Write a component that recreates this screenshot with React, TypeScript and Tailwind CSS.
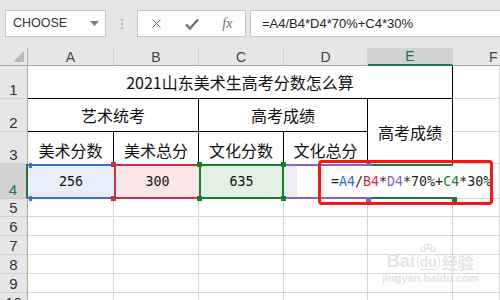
import { X } from "lucide-react";

const cjk = "font-['Noto_Sans_CJK_SC',sans-serif]";
const mono = "font-['DejaVu_Sans_Mono','Liberation_Mono',monospace]";

const tbl = `flex items-center justify-center border-black text-[16px] leading-none text-[#111] ${cjk}`;
const grid = "border-r border-b border-[#d4d4d4]";
const colHead =
  "flex items-center justify-center border-r border-b border-r-[#cfcfcf] border-b-[#ababab] bg-[#e6e6e6] text-[14px] leading-none text-[#444]";

function RowHead({ n, active }: { n: number; active?: boolean }) {
  return (
    <div
      className={
        active
          ? "flex items-end justify-center border-b border-r-2 border-b-[#c6c6c6] border-r-[#217346] bg-[#d2d2d2] pb-[1px] text-[15px] leading-none text-[#217346]"
          : "flex items-end justify-center border-b border-r border-b-[#d0d0d0] border-r-[#a9a9a9] bg-[#e6e6e6] pb-[1px] text-[15px] leading-none text-[#333]"
      }
    >
      {n}
    </div>
  );
}

function FormulaBar() {
  return (
    <div className="flex h-[48px] items-start bg-[#e6e6e6] pl-[5px] pt-[10px]">
      <div className="flex h-[27px] w-[101px] items-center justify-between border border-[#c6c6c6] bg-white pl-[7px] pr-[6px] text-[12.5px] text-[#333]">
        <span>CHOOSE</span>
        <svg width="9" height="5" viewBox="0 0 9 5">
          <path d="M0 0h9L4.5 5z" fill="#7a7a7a" />
        </svg>
      </div>
      <div className="flex h-[27px] w-[31px] flex-col items-center justify-center gap-[2px]">
        <span className="h-[2px] w-[2px] bg-[#b5b5b5]" />
        <span className="h-[2px] w-[2px] bg-[#b5b5b5]" />
        <span className="h-[2px] w-[2px] bg-[#b5b5b5]" />
      </div>
      <div className="flex h-[27px] w-[109px] items-center border border-[#c6c6c6] bg-white pl-[1px] text-[#6e6e6e]">
        <span className="flex w-[36px] justify-center">
          <X size={15} strokeWidth={1.6} />
        </span>
        <span className="flex w-[36px] justify-center">
          <svg width="14" height="12" viewBox="0 0 14 12">
            <path d="M1 6.5 5 10.5 13 1.5" fill="none" stroke="#6e6e6e" strokeWidth="2.4" />
          </svg>
        </span>
        <span className="flex w-[36px] justify-center font-['Liberation_Serif',serif] text-[14px] italic leading-none">
          fx
        </span>
      </div>
      <div className="ml-[4px] flex h-[27px] flex-1 items-center border border-r-0 border-[#c6c6c6] bg-white pl-[11px] text-[13px] text-[#222]">
        =A4/B4*D4*70%+C4*30%
      </div>
    </div>
  );
}

function Sheet() {
  const empty = [5, 6, 7, 8, 9, 10];
  return (
    <div className="grid grid-cols-[28px_86px_85px_85px_84px_85px_1fr] grid-rows-[18px_33px_33px_32px_35px_18px_19px_19px_19px_19px_19px]">
      {/* column header */}
      <div className="relative border-r border-b border-r-[#a9a9a9] border-b-[#ababab] bg-[#e6e6e6]">
        <svg className="absolute right-[3px] bottom-[3px]" width="11" height="11" viewBox="0 0 11 11">
          <path d="M11 0v11H0z" fill="#b9b9b9" />
        </svg>
      </div>
      <div className={colHead}>A</div>
      <div className={colHead}>B</div>
      <div className={colHead}>C</div>
      <div className={colHead}>D</div>
      <div className="flex items-center justify-center border-r border-b-2 border-r-[#cfcfcf] border-b-[#217346] bg-[#d2d2d2] text-[14px] leading-none text-[#217346]">
        E
      </div>
      <div className="flex items-center justify-start border-b border-b-[#ababab] bg-[#e6e6e6] pl-[36px] text-[14px] leading-none text-[#444]">
        F
      </div>

      {/* row 1 */}
      <RowHead n={1} />
      <div className={`${tbl} col-span-5 border-r border-b`}>2021山东美术生高考分数怎么算</div>
      <div className={grid} />

      {/* row 2 */}
      <RowHead n={2} />
      <div className={`${tbl} col-span-2 border-r border-b`}>艺术统考</div>
      <div className={`${tbl} col-span-2 border-r border-b`}>高考成绩</div>
      <div className={`${tbl} row-span-2 border-r`}>高考成绩</div>
      <div className={grid} />

      {/* row 3 */}
      <RowHead n={3} />
      <div className={`${tbl} border-r pt-[3px]`}>美术分数</div>
      <div className={`${tbl} border-r pt-[3px]`}>美术总分</div>
      <div className={`${tbl} border-r pt-[3px]`}>文化分数</div>
      <div className={`${tbl} border-r pt-[3px]`}>文化总分</div>
      <div className={grid} />

      {/* row 4 */}
      <RowHead n={4} active />
      <div className={`flex items-center justify-center border-y-2 border-[#3a6fcf] bg-[#e7eef9] text-[13.3px] text-[#111] ${mono}`}>
        256
      </div>
      <div className={`flex items-center justify-center border-y-2 border-l-2 border-[#c5343e] bg-[#fae6e7] text-[13.3px] text-[#111] ${mono}`}>
        300
      </div>
      <div className={`flex items-center justify-center border-2 border-[#12812c] bg-[#e3f1e5] text-[13.3px] text-[#111] ${mono}`}>
        635
      </div>
      <div className="border-y-2 border-[#8c60c9] bg-[#eeebf8]" />
      <div className="border-y-2 border-[#217346] bg-white" />
      <div className={grid} />

      {empty.map((n) => (
        <div key={n} className="contents">
          <RowHead n={n} />
          <div className={grid} />
          <div className={grid} />
          <div className={grid} />
          <div className={grid} />
          <div className={grid} />
          <div className={grid} />
        </div>
      ))}
    </div>
  );
}

export default function App() {
  return (
    <div className="relative h-[300px] w-[500px] overflow-hidden bg-white font-['Liberation_Sans',sans-serif]">
      <FormulaBar />
      <Sheet />

      {/* range handles */}
      <span className="absolute left-[29px] top-[163px] h-[5px] w-[3px] bg-[#3a6fcf]" />
      <span className="absolute left-[29px] top-[196px] h-[5px] w-[3px] bg-[#3a6fcf]" />
      <span className="absolute left-[111px] top-[162px] h-[5px] w-[5px] bg-[#c5343e]" />
      <span className="absolute left-[111px] top-[196px] h-[5px] w-[5px] bg-[#c5343e]" />
      <span className="absolute left-[197px] top-[162px] h-[5px] w-[5px] bg-[#12812c]" />
      <span className="absolute left-[197px] top-[196px] h-[5px] w-[5px] bg-[#12812c]" />
      <span className="absolute left-[281px] top-[162px] h-[5px] w-[5px] bg-[#12812c]" />
      <span className="absolute left-[281px] top-[196px] h-[5px] w-[5px] bg-[#12812c]" />
      <span className="absolute left-[366px] top-[162px] h-[5px] w-[5px] bg-[#8c60c9]" />
      <span className="absolute left-[366px] top-[197px] h-[5px] w-[5px] bg-[#8c60c9]" />

      {/* in-cell editor */}
      <div className={`absolute left-[297px] top-[166px] flex h-[31px] w-[196px] items-center bg-white pl-[34px] text-[13.3px] text-[#222] ${mono}`}>
        =<span className="text-[#2e6bd6]">A4</span>/<span className="text-[#c8303a]">B4</span>*
        <span className="text-[#8b5cc8]">D4</span>*70%+<span className="text-[#1a7d2a]">C4</span>*30%
      </div>
      <span className="absolute left-[452px] top-[197px] h-[5px] w-[5px] bg-[#217346]" />

      {/* annotation */}
      <div className="absolute left-[318px] top-[160px] h-[45px] w-[175px] rounded-[4px] border-[3px] border-[#ff1414]" />

      {/* watermark */}
      <div className="absolute left-[382px] top-[244px] flex flex-col items-center text-[#e4e4e4]">
        <div className="flex items-end gap-[2px] font-bold leading-none">
          <span className="text-[18px]">Bai</span>
          <span className="flex flex-col items-center">
            <svg width="16" height="10" viewBox="0 0 16 10">
              <g fill="none" stroke="#e0e0e0" strokeWidth="1.2">
                <ellipse cx="3" cy="5" rx="2" ry="2.5" />
                <ellipse cx="6.5" cy="2.5" rx="1.8" ry="2.2" />
                <ellipse cx="10" cy="2.5" rx="1.8" ry="2.2" />
                <ellipse cx="13" cy="5" rx="2" ry="2.5" />
              </g>
            </svg>
            <span className="rounded-[6px] border border-[#e0e0e0] px-[2px] text-[14px]">du</span>
          </span>
          <span className={`text-[16px] ${cjk}`}>经验</span>
        </div>
        <span className="mt-[3px] text-[11px] font-bold leading-none">jingyan.baidu.com</span>
      </div>
    </div>
  );
}
